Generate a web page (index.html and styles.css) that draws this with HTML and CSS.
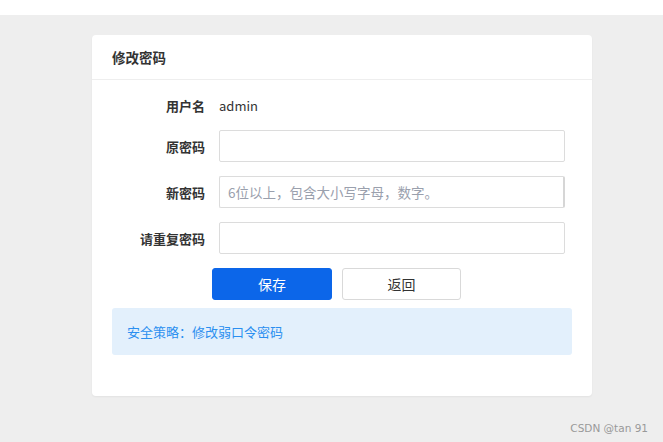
FILE: index.html
```html
<!DOCTYPE html>
<html lang="zh-CN">
<head>
<meta charset="utf-8">
<title>修改密码</title>
<link rel="stylesheet" href="styles.css">
</head>
<body>
<div class="topbar"></div>
<div class="page">
  <div class="card">
    <div class="card-header">修改密码</div>
    <div class="card-body">
      <div class="row row-static">
        <div class="label">用户名</div>
        <div class="value">admin</div>
      </div>
      <div class="row">
        <div class="label">原密码</div>
        <input class="input" type="password">
      </div>
      <div class="row">
        <div class="label">新密码</div>
        <input class="input input-focus" type="password" placeholder="6位以上，包含大小写字母，数字。">
      </div>
      <div class="row">
        <div class="label">请重复密码</div>
        <input class="input" type="password">
      </div>
      <div class="actions">
        <button class="btn btn-primary">保存</button>
        <button class="btn btn-default">返回</button>
      </div>
      <div class="notice">安全策略：修改弱口令密码</div>
    </div>
  </div>
  <div class="watermark">CSDN @tan 91</div>
</div>
</body>
</html>
```

FILE: styles.css
```css
html, body {
  margin: 0;
  padding: 0;
}
body {
  background: #eeeeee;
  font-family: "Noto Sans CJK SC", "Noto Sans", sans-serif;
  color: #333;
  height: 442px;
  overflow: hidden;
}
.topbar {
  height: 15px;
  background: #ffffff;
}
.page {
  padding: 20px 0 0 92px;
}
.card {
  width: 500px;
  background: #fff;
  border-radius: 4px;
  box-shadow: 0 1px 2px rgba(0,0,0,0.05);
}
.card-header {
  height: 44px;
  line-height: 44px;
  padding-left: 20px;
  font-size: 13.5px;
  font-weight: bold;
  color: #333;
  border-bottom: 1px solid #eeeeee;
}
.card-body {
  padding: 9px 20px 41px 20px;
}
.row {
  display: flex;
  align-items: center;
  height: 32px;
  margin-bottom: 14px;
}
.row-static {
  margin-bottom: 9px;
}
.label {
  width: 93px;
  text-align: right;
  font-size: 13px;
  font-weight: bold;
  color: #333;
  margin-right: 14px;
  flex-shrink: 0;
}
.value {
  font-size: 13px;
  color: #333;
}
.input {
  box-sizing: border-box;
  width: 346px;
  height: 32px;
  border: 1px solid #dcdcdc;
  border-radius: 2px;
  padding: 0 8px;
  font-family: inherit;
  font-size: 13.5px;
  color: #333;
  outline: none;
  background: #fff;
}
.input::placeholder {
  color: #9aa0ad;
}
.input-focus {
  border-right: 2px solid #d6d6d6;
}
.actions {
  display: flex;
  gap: 10px;
  padding-left: 100px;
  margin-top: 13px;
}
.btn {
  box-sizing: border-box;
  width: 120px;
  height: 32px;
  border-radius: 3px;
  font-family: inherit;
  font-size: 14px;
  cursor: pointer;
}
.btn-primary {
  background: #0c66e9;
  border: 1px solid #0c66e9;
  color: #fff;
}
.btn-default {
  width: 119px;
  background: #fff;
  border: 1px solid #d9d9d9;
  color: #333;
}
.notice {
  margin-top: 8px;
  height: 47px;
  line-height: 47px;
  padding-left: 15px;
  background: #e3f0fc;
  border-radius: 3px;
  color: #2b8ff0;
  font-size: 13px;
}
.watermark {
  width: 556px;
  text-align: right;
  margin-top: 25px;
  font-family: "DejaVu Sans", sans-serif;
  font-size: 10.5px;
  line-height: 14px;
  color: #999;
}
```
